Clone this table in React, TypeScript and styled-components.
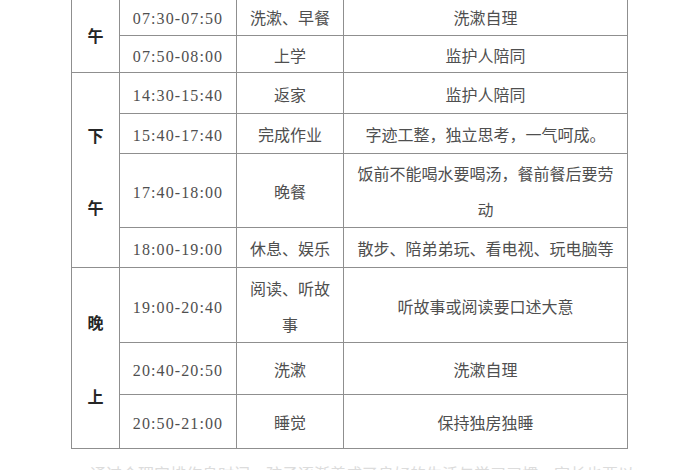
import React from "react";
import styled, { createGlobalStyle } from "styled-components";

const Global = createGlobalStyle`
  html, body {
    margin: 0;
    padding: 0;
    background: #fff;
    overflow: hidden;
  }
  body {
    font-family: "Liberation Serif", "Noto Sans CJK SC", serif;
  }
`;

const Page = styled.div`
  width: 700px;
  height: 470px;
  overflow: hidden;
`;

const Sheet = styled.div`
  display: grid;
  grid-template-columns: 47px 116px 106px 283px;
  grid-template-rows: 38px 36px 40px 39px 73px 39px 74px 51px 53px;
  gap: 1px;
  padding: 1px;
  background: #8f8f8f;
  width: max-content;
  margin: -4px 0 0 71px;
`;

const Cell = styled.div<{ $wide?: boolean }>`
  background: #fff;
  display: flex;
  align-items: center;
  justify-content: center;
  text-align: center;
  padding: 5px ${(p) => (p.$wide ? "10px" : "6px")} 0;
  font-size: 16px;
  line-height: 36px;
  color: #4f4f4f;
`;

const Time = styled(Cell)`
  letter-spacing: 1.1px;
`;

const Group = styled(Cell)<{ $span: number; $gap: number }>`
  grid-column: 1;
  grid-row: span ${(p) => p.$span};
  flex-direction: column;
  gap: ${(p) => p.$gap}px;
  font-weight: 700;
  color: #262626;
  line-height: 18px;
`;

const Trail = styled.p`
  margin: 14px 0 0 90px;
  width: 547px;
  white-space: nowrap;
  overflow: hidden;
  font-size: 16px;
  line-height: 20px;
  color: #dcdcdc;
  font-family: "Noto Sans CJK SC", sans-serif;
`;

type Row = [string, string, string];

const sections: { label: string[]; gap: number; rows: Row[] }[] = [
  {
    label: ["午"],
    gap: 0,
    rows: [
      ["07:30-07:50", "洗漱、早餐", "洗漱自理"],
      ["07:50-08:00", "上学", "监护人陪同"],
    ],
  },
  {
    label: ["下", "午"],
    gap: 54,
    rows: [
      ["14:30-15:40", "返家", "监护人陪同"],
      ["15:40-17:40", "完成作业", "字迹工整，独立思考，一气呵成。"],
      ["17:40-18:00", "晚餐", "饭前不能喝水要喝汤，餐前餐后要劳动"],
      ["18:00-19:00", "休息、娱乐", "散步、陪弟弟玩、看电视、玩电脑等"],
    ],
  },
  {
    label: ["晚", "上"],
    gap: 56,
    rows: [
      ["19:00-20:40", "阅读、听故事", "听故事或阅读要口述大意"],
      ["20:40-20:50", "洗漱", "洗漱自理"],
      ["20:50-21:00", "睡觉", "保持独房独睡"],
    ],
  },
];

const App = () => {
  return (
    <Page>
      <Global />
      <Sheet>
        {sections.map((s) => (
          <React.Fragment key={s.rows[0][0]}>
            <Group $span={s.rows.length} $gap={s.gap}>
              {s.label.map((c) => (
                <span key={c}>{c}</span>
              ))}
            </Group>
            {s.rows.map(([time, task, note]) => (
              <React.Fragment key={time}>
                <Time>{time}</Time>
                <Cell>{task}</Cell>
                <Cell $wide>{note}</Cell>
              </React.Fragment>
            ))}
          </React.Fragment>
        ))}
      </Sheet>
      <Trail>通过合理安排作息时间，孩子逐渐养成了良好的生活与学习习惯，家长也要以身作则。</Trail>
    </Page>
  );
};

export default App;
